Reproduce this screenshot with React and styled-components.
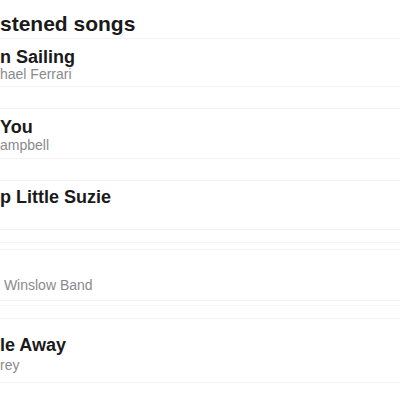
import React from "react";
import styled, { createGlobalStyle } from "styled-components";

const Global = createGlobalStyle`
  html, body { margin: 0; padding: 0; background: #ffffff; }
  body { font-family: "Liberation Sans", Arial, Helvetica, sans-serif; overflow: hidden; }
`;

const Page = styled.div`
  width: 400px;
  height: 400px;
  overflow: hidden;
  display: flex;
  flex-direction: column;
`;

const Heading = styled.h1`
  margin: 0;
  padding-top: 12px;
  font-size: 21px;
  line-height: 24px;
  font-weight: 700;
  color: #1a1a1a;
  white-space: pre;
`;

const List = styled.div`
  display: flex;
  flex-direction: column;
`;

const Row = styled.div`
  display: flex;
  flex-direction: column;
  margin-top: ${(p) => p.$gap}px;
  padding-top: ${(p) => p.$pt}px;
  padding-bottom: ${(p) => p.$pb}px;
  border-top: 1px solid #f3f3f3;
  border-bottom: 1px solid #f3f3f3;
`;

const Divider = styled.div`
  margin-top: ${(p) => p.$gap}px;
  height: 0;
  border-top: 1px solid #f5f5f5;
`;

const Title = styled.div`
  font-size: 18px;
  line-height: 20px;
  height: 20px;
  font-weight: 700;
  color: #1a1a1a;
  white-space: pre;
`;

const Artist = styled.div`
  margin-top: ${(p) => p.$gap || 0}px;
  font-size: 14px;
  line-height: 14px;
  height: 14px;
  color: #8a8a8e;
  white-space: pre;
`;

const songs = [
  { title: "n Sailing", artist: "hael Ferrari", gap: 2, pt: 8, pb: 5 },
  { title: "You", artist: "ampbell", gap: 21, pt: 8, pb: 6, sub: 1 },
  { title: "p Little Suzie", artist: "", gap: 21, pt: 6, pb: 8, after: 12 },
  { title: "", artist: "\u00a0Winslow Band", gap: 6, pt: 8, pb: 8, after: 4 },
  { title: "le Away", artist: "rey", gap: 12, pt: 16, pb: 10, sub: 3 },
];

export default function App() {
  return (
    <Page>
      <Global />
      <Heading>stened songs</Heading>
      <List>
        {songs.map((s, i) => (
          <React.Fragment key={i}>
            <Row $gap={s.gap} $pt={s.pt} $pb={s.pb}>
              <Title>{s.title}</Title>
              <Artist $gap={s.sub}>{s.artist}</Artist>
            </Row>
            {s.after ? <Divider $gap={s.after} /> : null}
          </React.Fragment>
        ))}
      </List>
    </Page>
  );
}
